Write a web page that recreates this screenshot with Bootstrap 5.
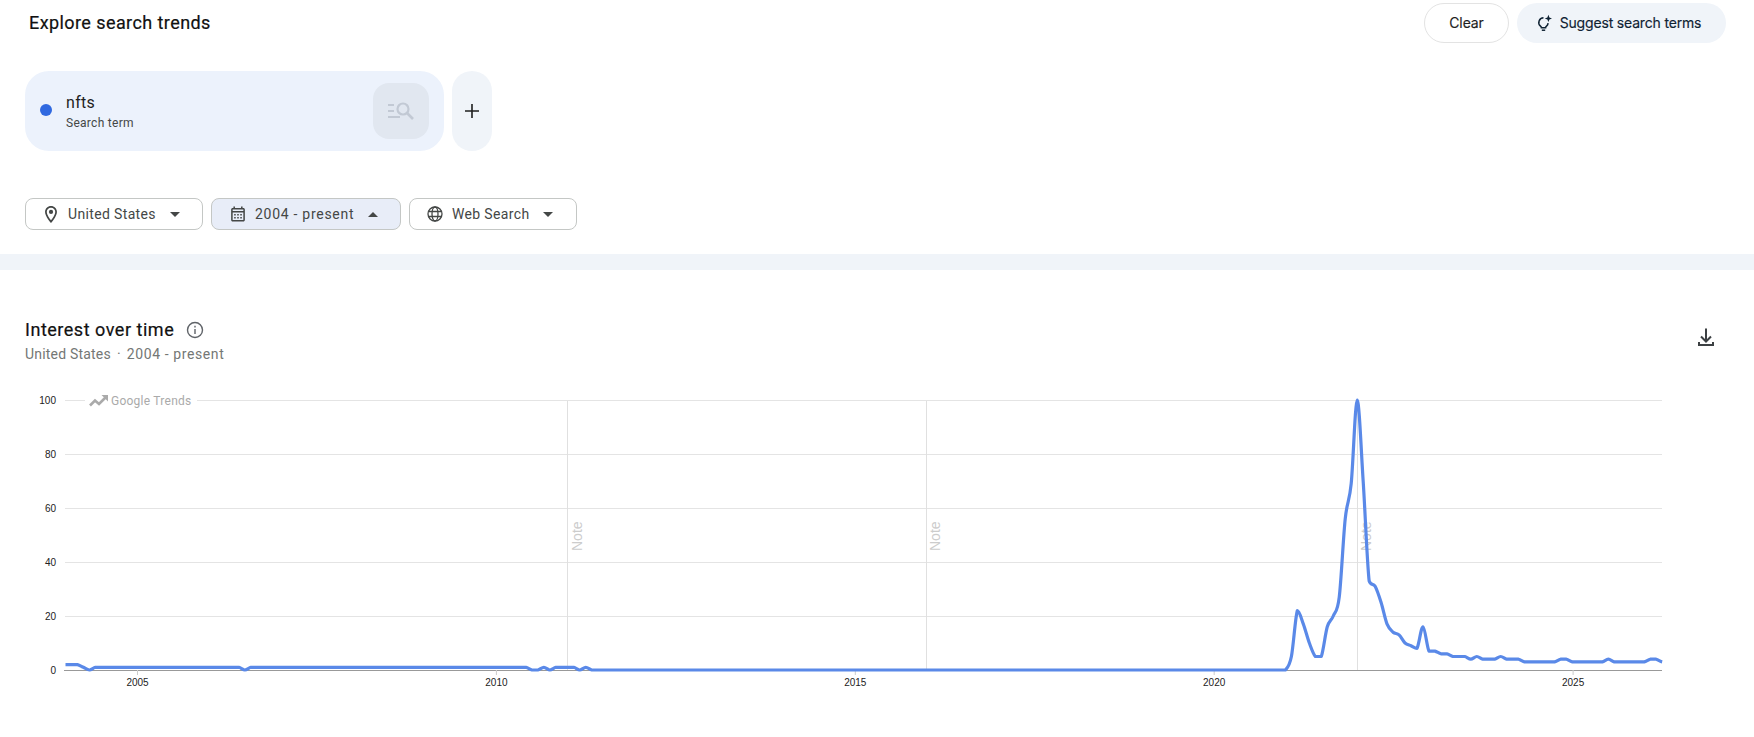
<!DOCTYPE html>
<html lang="en">

<head>
    <title>Explore search trends</title>
    <link rel="stylesheet" href="https://cdn.jsdelivr.net/npm/bootstrap@5.3.0/dist/css/bootstrap.min.css">
    <script src="https://cdn.jsdelivr.net/npm/bootstrap@5.3.0/dist/js/bootstrap.bundle.min.js"></script>
    <style>
        body { font-family: Roboto, "Noto Sans", sans-serif; color: #1f1f1f; background: #fff; overflow: hidden; }
        .top-bar { padding: 3px 28px 0 29px; }
        .page-title { font-size: 18px; font-weight: 400; letter-spacing: .42px; line-height: 24px; margin: 0; color: #111; -webkit-text-stroke: .2px #111; }
        .btn-clear, .btn-suggest { height: 40px; font-family: Inter, Roboto, sans-serif; font-size: 14px; font-weight: 400; line-height: 18px; padding: 0 0 1px; color: #1f1f1f; display: flex; align-items: center; justify-content: center; -webkit-text-stroke: .15px currentColor; }
        .btn-clear { width: 85px; border: 1px solid #e3e3e3; background: #fff; letter-spacing: -.1px; }
        .btn-suggest { width: 209px; border: 0; background: #f0f4f9; gap: 7px; color: #0f2233; letter-spacing: -.17px; padding-right: 7px; }
        .term-row { margin: 28px 0 0 25px; gap: 8px; }
        .term-box { width: 419px; height: 80px; background: #ecf2fc; border-radius: 24px; padding: 0 15px; }
        .term-dot { width: 12px; height: 12px; border-radius: 50%; background: #3069e0; margin-right: 14px; margin-top: -2px; }
        .term-name { font-size: 16px; line-height: 22px; font-weight: 400; letter-spacing: .3px; color: #1f1f1f; margin-top: 1px; }
        .term-type { font-size: 12px; line-height: 16px; color: #444746; margin-top: 1px; letter-spacing: .28px; }
        .term-icon { width: 56px; height: 56px; border-radius: 16px; background: #e1e7f0; }
        .add-box { width: 40px; height: 80px; border-radius: 20px; background: #f0f4f9; }
        .filter-row { margin: 47px 0 0 25px; gap: 8px; }
        .filter-btn { height: 32px; border: 1px solid #c4c7c5; border-radius: 8px; background: #fff; font-size: 14px; font-weight: 400; letter-spacing: .35px; color: #444746; padding: 0; display: flex; align-items: center; }
        .filter-btn.is-open { background: #e8edf8; letter-spacing: .72px; }
        .filter-geo { width: 178px; padding-left: 18px; }
        .filter-time { width: 190px; padding-left: 18px; }
        .filter-prop { width: 168px; padding-left: 17px; }
        .filter-label { margin-left: 9px; }
        .filter-geo .filter-label { margin-left: 10px; }
        .caret-down, .caret-up { width: 0; height: 0; border-left: 5.5px solid transparent; border-right: 5.5px solid transparent; margin-left: 14px; }
        .caret-down { border-top: 5.5px solid #444746; }
        .caret-up { border-bottom: 5.5px solid #444746; }
        .band { height: 16px; margin-top: 24px; background: #f0f4f9; }
        .section-head { margin-top: 48px; padding: 0 36px 0 25px; }
        .section-title { font-size: 18px; font-weight: 400; letter-spacing: .52px; line-height: 24px; margin: 0; color: #111; -webkit-text-stroke: .2px #111; }
        .section-sub { font-size: 14px; line-height: 20px; margin-top: 2px; color: #747775; letter-spacing: .2px; }
        .sub-dot { margin: 0 6px; }
        .sub-date { letter-spacing: .6px; }
        .dl-icon { margin-top: 7px; }
        .chart-svg { display: block; margin-top: 16px; }
        .axis-y, .axis-x { font-family: "Liberation Sans", Arial, sans-serif; font-size: 10px; fill: #222; }
        .note-txt { font-family: "Liberation Sans", Arial, sans-serif; font-size: 14px; fill: #ccc; }
        .brand-txt { font-family: Roboto, sans-serif; font-size: 12px; letter-spacing: .25px; fill: #aaa; }
    </style>
</head>

<body>
    <div class="top-bar d-flex justify-content-between align-items-center">
        <h1 class="page-title">Explore search trends</h1>
        <div class="d-flex gap-2">
            <button class="btn btn-clear rounded-pill">Clear</button>
            <button class="btn btn-suggest rounded-pill">
                <svg width="18" height="18" viewBox="0 0 18 18" fill="none" stroke="#0f2233" stroke-width="1.5">
                    <path d="M8.500 3.800a4.700 4.700 0 0 0-3 8.300c.6.500.9 1 .9 1.600h4.200c0-.6.3-1.100.9-1.600a4.700 4.700 0 0 0 1.600-3" />
                    <path d="M6.800 16.200h3.400" />
                    <path d="M13.400.8l1 2.600 2.600 1-2.600 1-1 2.600-1-2.600-2.600-1 2.600-1z" fill="#0f2233" stroke="none" />
                </svg>
                Suggest search terms
            </button>
        </div>
    </div>

    <div class="term-row d-flex">
        <div class="term-box d-flex align-items-center">
            <span class="term-dot"></span>
            <div class="flex-grow-1">
                <div class="term-name">nfts</div>
                <div class="term-type">Search term</div>
            </div>
            <div class="term-icon d-flex align-items-center justify-content-center">
                <svg width="30" height="24" viewBox="0 0 30 24" fill="none" stroke="#c2c9d4" stroke-width="2.2">
                    <path d="M2 6h6M2 12h6M2 18h12" />
                    <circle cx="17" cy="10" r="5.5" />
                    <path d="M21 14l6 6" stroke-width="2.6" />
                </svg>
            </div>
        </div>
        <div class="add-box d-flex align-items-center justify-content-center">
            <svg width="16" height="16" viewBox="0 0 16 16" stroke="#1f1f1f" stroke-width="1.6">
                <path d="M8 1v14M1 8h14" />
            </svg>
        </div>
    </div>

    <div class="filter-row d-flex">
        <button class="btn filter-btn filter-geo">
            <svg width="14" height="17" viewBox="4 2 16 20" fill="#444746">
                <path d="M12 2C8.13 2 5 5.13 5 9c0 5.25 7 13 7 13s7-7.75 7-13c0-3.87-3.13-7-7-7zM7 9c0-2.76 2.24-5 5-5s5 2.24 5 5c0 2.88-2.88 7.19-5 9.88C9.92 16.21 7 11.85 7 9z" />
                <circle cx="12" cy="9" r="2.5" />
            </svg>
            <span class="filter-label">United States</span><span class="caret-down"></span>
        </button>
        <button class="btn filter-btn filter-time is-open">
            <svg width="16" height="16" viewBox="3 1.5 18 21" fill="#444746">
                <path d="M19 4h-1V2h-2v2H8V2H6v2H5c-1.1 0-2 .9-2 2v14c0 1.1.9 2 2 2h14c1.1 0 2-.9 2-2V6c0-1.100-.9-2-2-2zm0 16H5V10h14v10zM5 8V6h14v2H5z" />
                <path d="M7 12h2v2H7zM11 12h2v2h-2zM15 12h2v2h-2zM7 16h2v2H7zM11 16h2v2h-2zM15 16h2v2h-2z" />
            </svg>
            <span class="filter-label">2004 - present</span><span class="caret-up"></span>
        </button>
        <button class="btn filter-btn filter-prop">
            <svg width="16" height="16" viewBox="0 0 16 16" fill="none" stroke="#444746" stroke-width="1.3">
                <circle cx="8" cy="8" r="7" />
                <ellipse cx="8" cy="8" rx="3" ry="7" />
                <path d="M1.300 5.500h13.400M1.300 10.500h13.400" />
            </svg>
            <span class="filter-label">Web Search</span><span class="caret-down"></span>
        </button>
    </div>

    <div class="band"></div>

    <div class="section-head d-flex justify-content-between align-items-start">
        <div>
            <div class="d-flex align-items-center gap-2">
                <h2 class="section-title">Interest over time</h2>
                <svg class="ms-1" width="18" height="18" viewBox="0 0 18 18" fill="none" stroke="#5f6368" stroke-width="1.4">
                    <circle cx="9" cy="9" r="7.500" />
                    <path d="M9 8v5" />
                    <path d="M9 4.800v1.600" />
                </svg>
            </div>
            <div class="section-sub">United States<span class="sub-dot">·</span><span class="sub-date">2004 - present</span></div>
        </div>
        <svg class="dl-icon" width="24" height="24" viewBox="0 0 24 24" fill="none" stroke="#3c4043" stroke-width="2">
            <path d="M12 3.500v13M7 11.500l5 5 5-5" />
            <path d="M5 17v3h14v-3" />
        </svg>
    </div>

    <svg id="chart" class="chart-svg" width="1754" height="320" viewBox="0 380 1754 320">
        <g id="grid"></g>
        <g stroke="#e0e0e0" stroke-width="1">
            <path d="M567.500 400v270M926.500 400v270M1357.500 400v270" />
        </g>
        <path d="M65 400.500h20M197 400.500h1465" stroke="#e4e4e4" />
        <path d="M90 405.500l5-5 4 3.500 6.500-6.500" fill="none" stroke="#aaa" stroke-width="2.600" />
        <path d="M101.500 395h6.500v6.500z" fill="#aaa" />
        <text class="brand-txt" x="111" y="404.500">Google Trends</text>
        <text class="note-txt" transform="translate(582 551) rotate(-90)">Note</text>
        <text class="note-txt" transform="translate(940 551) rotate(-90)">Note</text>
        <text class="note-txt" transform="translate(1371 551) rotate(-90)">Note</text>
        <path d="M64 670.500h1598" stroke="#999" />
        <g id="ticks"></g>
        <path id="trend" fill="none" stroke="#5a89e8" stroke-width="3.200" stroke-linejoin="round" />
    </svg>

    <script>
        // monthly values, 2004-01 to 2026-04
        const valores = [2, 2, 2, 1, 0];
        for (let i = 5; i <= 87; i++) {
            valores.push([30, 78, 79, 81, 86].includes(i) ? 0 : 1);
        }
        for (let i = 88; i <= 204; i++) valores.push(0);
        valores.push(5, 22, 17, 10, 5, 5, 16, 20, 27, 56, 69, 100, 70, 33, 31, 25, 17, 14, 13, 10, 9, 8, 16, 7, 7, 6, 6, 5, 5,
            5, 4, 5, 4, 4, 4, 5, 4, 4, 4, 3, 3, 3, 3, 3, 3, 4, 4, 3, 3, 3, 3, 3, 3, 4, 3, 3, 3, 3, 3, 3, 4, 4, 3);

        const xDe = i => 65.5 + i * 5.98;
        const yDe = v => 670 - v * 2.7;

        const pts = valores.map((v, i) => [xDe(i), yDe(v)]);
        let d = `M${pts[0][0]} ${pts[0][1]}`;
        for (let i = 0; i < pts.length - 1; i++) {
            const p0 = pts[Math.max(i - 1, 0)];
            const p1 = pts[i];
            const p2 = pts[i + 1];
            const p3 = pts[Math.min(i + 2, pts.length - 1)];
            const c1y = Math.min(Math.max(p1[1] + (p2[1] - p0[1]) / 6, Math.min(p1[1], p2[1])), Math.max(p1[1], p2[1]));
            const c2y = Math.min(Math.max(p2[1] - (p3[1] - p1[1]) / 6, Math.min(p1[1], p2[1])), Math.max(p1[1], p2[1]));
            d += `C${p1[0] + 2} ${c1y} ${p2[0] - 2} ${c2y} ${p2[0]} ${p2[1]}`;
        }
        document.getElementById('trend').setAttribute('d', d);

        let grid = '';
        [100, 80, 60, 40, 20, 0].forEach(v => {
            const y = yDe(v);
            if (v > 0 && v < 100) grid += `<path d="M65 ${y + 0.5}H1662" stroke="#e4e4e4"/>`;
            grid += `<text class="axis-y" x="56" y="${y + 3.5}" text-anchor="end">${v}</text>`;
        });
        document.getElementById('grid').innerHTML = grid;

        let ticks = '';
        [2005, 2010, 2015, 2020, 2025].forEach((anio, n) => {
            const x = 137.5 + n * 358.9;
            ticks += `<path d="M${x} 670v5" stroke="#ccc"/>`;
            ticks += `<text class="axis-x" x="${x}" y="686" text-anchor="middle">${anio}</text>`;
        });
        document.getElementById('ticks').innerHTML = ticks;
    </script>
</body>

</html>
